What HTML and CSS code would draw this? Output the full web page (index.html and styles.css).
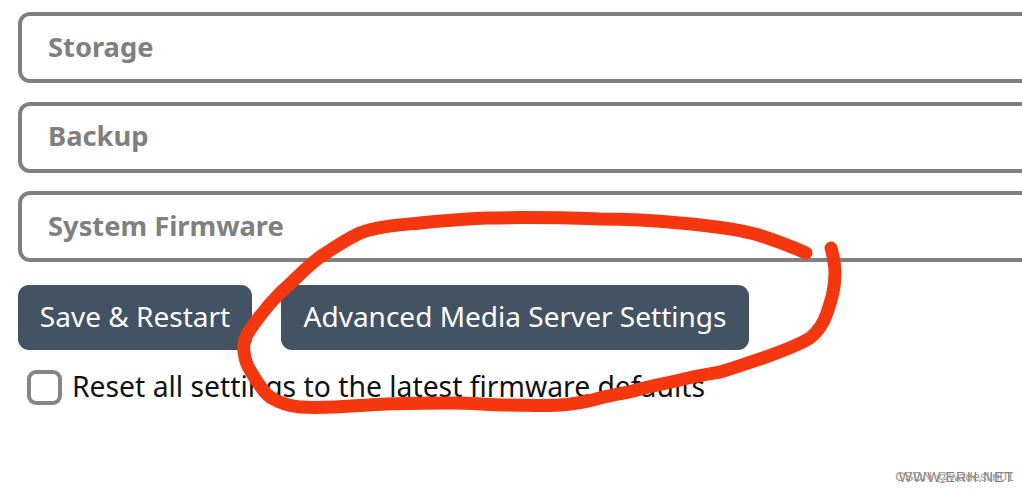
FILE: index.html
```html
<!DOCTYPE html>
<html lang="en">
<head>
<meta charset="utf-8">
<title>Settings</title>
<link rel="stylesheet" href="styles.css">
</head>
<body>
<main class="page">
  <section class="panel"><h2 class="panel-title">Storage</h2></section>
  <section class="panel"><h2 class="panel-title">Backup</h2></section>
  <section class="panel"><h2 class="panel-title">System Firmware</h2></section>
  <div class="actions">
    <button class="btn btn-save" type="button">Save &amp; Restart</button>
    <button class="btn btn-advanced" type="button">Advanced Media Server Settings</button>
  </div>
  <label class="reset">
    <span class="checkbox"></span>
    <span>Reset all settings to the latest firmware defaults</span>
  </label>
</main>
<svg class="ink" width="1022" height="492" viewBox="0 0 1022 492" aria-hidden="true">
  <path d="M806 253C790 246 775 240 755 234C735 229 715 226 680 223C650 220 630 219 600 219C570 218 530 217 487 218C465 219 440 221 420 223C400 225 378 226 360 233C345 240 335 247 320 257C305 268 295 280 280 293C268 305 258 318 250 330C244 338 243 344 244 352C245 360 246 364 250 370C256 380 262 391 270 397C278 402 288 406 300 407C328 409 360 405 387 404C410 403 432 403 453 403C472 403 490 405 507 405C525 405 545 406 560 405C575 404 590 401 600 398C615 394 628 393 640 389C655 385 668 383 680 380C695 376 708 374 720 372C735 368 750 362 763 358C780 352 797 346 810 338C820 330 824 322 827 313C832 298 835 288 835 273C835 262 833 256 831 248" />
</svg>
<div class="watermark"><span class="mark">WWW.ERH.NET</span><span class="mark mark-over">CSDN @wadeslin01</span></div>
</body>
</html>
```

FILE: styles.css
```css
html, body {
  margin: 0;
  width: 1022px;
  height: 492px;
  overflow: hidden;
  background: #fff;
}

.page {
  display: flex;
  flex-direction: column;
  padding: 12px 0 0 18px;
  font-family: "Noto Sans", "Open Sans", sans-serif;
}

.panel {
  box-sizing: border-box;
  width: 1040px;
  height: 71px;
  margin-bottom: 18.5px;
  padding: 0 0 3px 26px;
  display: flex;
  align-items: center;
  border: 4px solid #808080;
  border-radius: 12px;
}

.panel-title {
  margin: 0;
  font-size: 27.3px;
  font-weight: 700;
  color: #808080;
}

.actions {
  display: flex;
  gap: 29px;
  margin-top: 4px;
}

.btn {
  height: 65px;
  border: 0;
  border-radius: 11px;
  background: #435364;
  color: #fff;
  font-family: inherit;
  font-size: 28px;
  padding: 0 0 3px;
}

.btn-save { width: 234px; }
.btn-advanced { width: 468px; }

.reset {
  display: flex;
  align-items: center;
  gap: 10px;
  margin: 19px 0 0 9px;
  font-size: 28.3px;
  color: #111;
}

.reset span:last-child {
  position: relative;
  top: -2px;
}

.checkbox {
  box-sizing: border-box;
  width: 35px;
  height: 35px;
  border: 4px solid #868686;
  border-radius: 9px;
}

.ink {
  position: absolute;
  left: 0;
  top: 0;
  fill: none;
  stroke: #f5370f;
  stroke-width: 13px;
  stroke-linecap: round;
  stroke-linejoin: round;
}

.watermark {
  position: absolute;
  right: 8px;
  top: 469px;
  width: 120px;
  height: 16px;
  font-family: "Liberation Sans", sans-serif;
  font-size: 14px;
  color: #8a7a74;
}

.mark {
  position: absolute;
  right: 0;
  top: 0;
  white-space: nowrap;
  letter-spacing: 1px;
}

.mark-over {
  color: #9a9a9a;
  font-size: 13px;
  top: 0;
  letter-spacing: 0;
}
```
